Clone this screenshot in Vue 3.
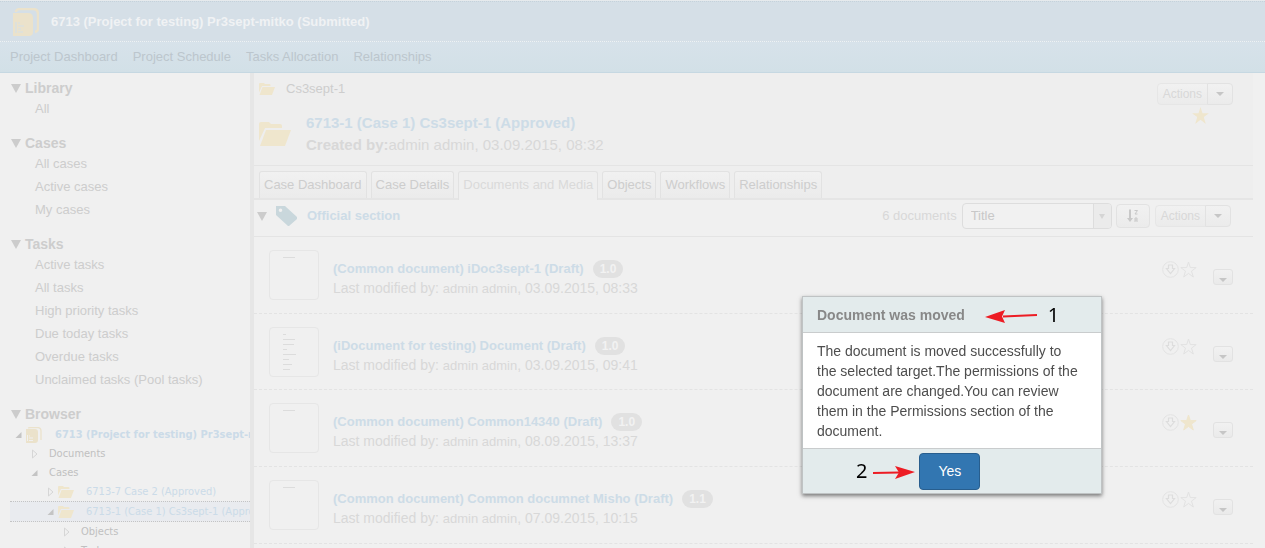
<script setup>
import { ref } from 'vue'

const navLinks = ['Project Dashboard', 'Project Schedule', 'Tasks Allocation', 'Relationships']

const sections = [
  { title: 'Library', items: ['All'] },
  { title: 'Cases', items: ['All cases', 'Active cases', 'My cases'] },
  {
    title: 'Tasks',
    items: ['Active tasks', 'All tasks', 'High priority tasks', 'Due today tasks', 'Overdue tasks', 'Unclaimed tasks (Pool tasks)'],
  },
]

const tree = [
  { label: '6713 (Project for testing) Pr3sept-mitko (Submitted)', level: 0, open: true, icon: 'project' },
  { label: 'Documents', level: 1, open: false },
  { label: 'Cases', level: 1, open: true },
  { label: '6713-7 Case 2 (Approved)', level: 2, open: false, icon: 'folder' },
  { label: '6713-1 (Case 1) Cs3sept-1 (Approved)', level: 2, open: true, icon: 'folder', selected: true },
  { label: 'Objects', level: 3, open: false },
  { label: 'Tasks', level: 3, open: false },
]

const tabs = ['Case Dashboard', 'Case Details', 'Documents and Media', 'Objects', 'Workflows', 'Relationships']
const activeTab = ref('Documents and Media')
const sortBy = ref('Title')

const longThumb = [3, 12, 11, 4, 13, 6, 9, 7]
const docs = ref([
  { title: '(Common document) iDoc3sept-1 (Draft)', version: '1.0', date: '03.09.2015, 08:33', lines: [12], starred: false },
  { title: '(iDocument for testing) Document (Draft)', version: '1.0', date: '03.09.2015, 09:41', lines: longThumb, starred: false },
  { title: '(Common document) Common14340 (Draft)', version: '1.0', date: '08.09.2015, 13:37', lines: [12], starred: true },
  { title: '(Common document) Common documnet Misho (Draft)', version: '1.1', date: '07.09.2015, 10:15', lines: [12], starred: false },
])
const dialogOpen = ref(true)
</script>

<template>
  <div class="page">
    <header class="header">
      <div class="title-bar">
        <svg class="project-icon" viewBox="0 0 26 28" aria-hidden="true">
          <path d="M3 4 V3 Q4 1 7 1 H20 Q25 1 25 6 V21 Q25 23 22 24" fill="none" stroke="#ebe2cb" stroke-width="2.4" />
          <path d="M0 5 H15 Q20 5 20 10 V24 Q20 28 16 28 H0 Z" fill="#ebe2cb" />
          <path d="M3 14 V25 M5 15 H7 M5 18 H11 M5 21 H8 M5 24 H10" stroke="#d5dfe7" stroke-width="1.2" />
        </svg>
        <h1>6713 (Project for testing) Pr3sept-mitko (Submitted)</h1>
      </div>
      <nav class="nav">
        <a v-for="l in navLinks" :key="l" href="#">{{ l }}</a>
      </nav>
    </header>

    <div class="columns">
      <aside class="sidebar">
        <section v-for="s in sections" :key="s.title" class="group">
          <h2><i class="tri"></i>{{ s.title }}</h2>
          <ul>
            <li v-for="i in s.items" :key="i"><a href="#">{{ i }}</a></li>
          </ul>
        </section>
        <section>
          <h2><i class="tri"></i>Browser</h2>
          <ul class="tree">
            <li v-for="n in tree" :key="n.label" :class="['level-' + n.level, { selected: n.selected }]">
              <svg class="toggle" viewBox="0 0 8 10" aria-hidden="true">
                <path v-if="n.open" d="M6.500 2 V8 H0.500 Z" fill="#c4c4c4" />
                <path v-else d="M1.500 1 V9 L6 5 Z" fill="none" stroke="#d6d6d6" />
              </svg>
              <svg v-if="n.icon === 'project'" class="node-icon" viewBox="0 0 16 16" aria-hidden="true">
                <path d="M2 1 Q3 .6 5 .6 H12 Q15 .6 15 4 V13" fill="none" stroke="#ebe2cb" stroke-width="1.300" />
                <path d="M0 2 H9 Q12 2 12 5 V13 Q12 16 9 16 H0 Z" fill="#ebe2cb" />
                <path d="M1.500 8 V14 M3 9 H4 M3 11 H7 M3 13.500 H7" stroke="#f0f0f0" />
              </svg>
              <svg v-else-if="n.icon" class="node-icon" viewBox="0 0 32 24" aria-hidden="true">
                <path d="M0 19 V2 Q0 0 2 0 H10 L12 2 H21 Q23 2 23 4 V6 H6 Z" fill="#efe6cd" />
                <path d="M7 8 H32 L26 24 H1 Z" fill="#efe6cd" />
              </svg>
              <a href="#">{{ n.label }}</a>
            </li>
          </ul>
        </section>
      </aside>

      <main class="main">
        <div class="case-head">
          <div class="case-info">
            <div class="crumb">
              <svg viewBox="0 0 32 24" aria-hidden="true">
                <path d="M0 19 V2 Q0 0 2 0 H10 L12 2 H21 Q23 2 23 4 V6 H6 Z" fill="#efe6cd" />
                <path d="M7 8 H32 L26 24 H1 Z" fill="#efe6cd" />
              </svg>
              <a href="#">Cs3sept-1</a>
            </div>
            <div class="case">
              <svg viewBox="0 0 32 24" aria-hidden="true">
                <path d="M0 19 V2 Q0 0 2 0 H10 L12 2 H21 Q23 2 23 4 V6 H6 Z" fill="#efe6cd" />
                <path d="M7 8 H32 L26 24 H1 Z" fill="#efe6cd" />
              </svg>
              <div>
                <a class="case-title" href="#">6713-1 (Case 1) Cs3sept-1 (Approved)</a>
                <p><b>Created by:</b>admin admin, 03.09.2015, 08:32</p>
              </div>
            </div>
          </div>
          <div class="case-tools">
            <div class="split">
              <button>Actions</button><button class="caret" aria-label="More actions"><i></i></button>
            </div>
            <svg class="star" viewBox="0 0 17 17" aria-hidden="true">
              <path d="M8.500 0 L10.500 6.200 H17 L11.800 10 L13.800 17 L8.500 12.800 L3.200 17 L5.200 10 L0 6.200 H6.500 Z" fill="#efe6cd" />
            </svg>
          </div>
        </div>

        <div class="tabs" role="tablist">
          <button
            v-for="t in tabs" :key="t" role="tab" :aria-selected="t === activeTab"
            :class="{ active: t === activeTab }" @click="activeTab = t"
          >{{ t }}</button>
        </div>

        <div class="toolbar">
          <i class="tri"></i>
          <svg class="tag" viewBox="0 0 22 20" aria-hidden="true">
            <path fill-rule="evenodd" d="M0 0 H9 L21 11 V13 L13 20 H12 L0 9 Z M4.500 2.500 A1.800 1.800 0 1 0 4.500 6.100 A1.800 1.800 0 1 0 4.500 2.500 Z" fill="#c9d7dc" />
          </svg>
          <h3>Official section</h3>
          <label for="sort">6 documents</label>
          <div class="select">
            <select id="sort" v-model="sortBy"><option>Title</option></select>
            <span><i></i></span>
          </div>
          <button class="sort" aria-label="Sort order">
            <svg viewBox="0 0 12 14" aria-hidden="true">
              <path d="M3 0.500 V11" stroke="#c8c8c8" stroke-width="2" />
              <path d="M0 9 H6 L3 13 Z" fill="#c8c8c8" />
              <path d="M7.500 1.500 H10.500 L8 5 H10.500 M8 13 V9 H10 V13 M8 11 H10" fill="none" stroke="#c8c8c8" />
            </svg>
          </button>
          <div class="split">
            <button>Actions</button><button class="caret" aria-label="More section actions"><i></i></button>
          </div>
        </div>

        <article v-for="d in docs" :key="d.title" class="doc">
          <div class="thumb">
            <i v-for="(w, k) in d.lines" :key="k" :style="{ width: w + 'px' }"></i>
          </div>
          <div class="doc-text">
            <div class="doc-title"><a href="#">{{ d.title }}</a><span class="badge">{{ d.version }}</span></div>
            <p>Last modified by: <a href="#">admin admin</a>, {{ d.date }}</p>
          </div>
          <div class="doc-icons">
            <svg viewBox="0 0 17 17" aria-hidden="true">
              <circle cx="8.500" cy="8.500" r="7.800" fill="none" stroke="#e3e3e3" />
              <path d="M6.500 4 H10.500 V7.500 H12.500 L8.500 12.500 L4.500 7.500 H6.500 Z" fill="none" stroke="#dddddd" stroke-width="1.200" />
            </svg>
            <svg viewBox="0 0 17 17" aria-hidden="true">
              <path
                d="M8.500 1 L10.300 6.600 H16.200 L11.500 10.100 L13.300 16 L8.500 12.400 L3.700 16 L5.500 10.100 L0.800 6.600 H6.700 Z"
                :fill="d.starred ? '#efe6cd' : 'none'" :stroke="d.starred ? '#efe6cd' : '#e2e2e2'"
              />
            </svg>
          </div>
          <button class="menu" aria-label="Document menu"><i></i></button>
        </article>
      </main>
    </div>

    <div v-if="dialogOpen" class="dialog" role="dialog" aria-labelledby="dialog-title">
      <header>
        <h2 id="dialog-title">Document was moved</h2>
        <svg class="arrow" viewBox="0 0 54 14" aria-hidden="true">
          <path d="M52 6 L18 7.500" stroke="#ed1c24" stroke-width="2" />
          <path d="M0 8 L20 1 L17 7.500 L20 14 Z" fill="#ed1c24" />
        </svg>
        <span class="mark">1</span>
      </header>
      <p>The document is moved successfully to the selected target.The permissions of the document are changed.You can review them in the Permissions section of the document.</p>
      <footer>
        <span class="mark">2</span>
        <svg class="arrow short" viewBox="0 0 42 14" aria-hidden="true">
          <path d="M0 8 L26 7.500" stroke="#ed1c24" stroke-width="2" />
          <path d="M42 7 L22 1 L26 7.500 L22 14 Z" fill="#ed1c24" />
        </svg>
        <button @click="dialogOpen = false">Yes</button>
      </footer>
    </div>
  </div>
</template>

<style>
body { background: #f0f0f0; }
</style>

<style scoped>
* { box-sizing: border-box; }
h1, h2, h3, p, ul { margin: 0; padding: 0; }
ul { list-style: none; }
a { color: inherit; text-decoration: none; }
svg { flex: none; display: block; }
button, select { font: inherit; color: inherit; }

.page {
  height: 100vh;
  overflow: hidden;
  display: flex;
  flex-direction: column;
  font: 13px/20px "Liberation Sans", Arial, sans-serif;
  color: #cdcdcd;
}

.header { flex: none; border-top: 1px solid #e6eaed; border-bottom: 1px solid #c6d8e2; background: #d5e0e8; }
.title-bar {
  display: flex;
  align-items: center;
  gap: 12px;
  height: 41px;
  padding-left: 13px;
  border-top: 1px dotted #c5d2db;
  border-bottom: 1px dotted #eef2f4;
  background: #d5dfe7;
}
.project-icon { width: 26px; height: 28px; }
h1 { font-size: 13px; color: #f0f2f4; }
.nav {
  display: flex;
  gap: 15px;
  height: 30px;
  align-items: center;
  padding-left: 10px;
  background: linear-gradient(#d7e2ea, #d2e0e7);
  color: #bcc6cd;
}

.columns { flex: 1; display: flex; min-height: 0; }
.sidebar {
  flex: none;
  width: 254px;
  padding-top: 6px;
  border-right: 4px solid #e6e6e6;
  overflow: hidden;
  white-space: nowrap;
}
.sidebar h2 { display: flex; align-items: center; padding-left: 11px; font-size: 14px; line-height: 18px; }
.tri { border: 5px solid transparent; border-top: 9px solid #cccccc; border-bottom: 0; }
.sidebar .tri { margin-right: 4px; }
.group { margin-bottom: 14px; }
.group li { padding-left: 35px; line-height: 23px; }

.tree { margin: 2px 0 0 10px; font: 11px/19px "DejaVu Sans Condensed", "DejaVu Sans", sans-serif; }
.tree li { display: flex; align-items: center; color: #c0c0c0; }
.toggle { width: 8px; height: 10px; }
.node-icon { width: 16px; height: 12px; margin: 0 12px 0 3px; }
.tree .level-0 { padding-left: 5px; color: #cbdbe8; font-weight: bold; }
.tree .level-0 .node-icon { height: 16px; margin: 0 13px 0 3px; }
.tree .level-1 { padding-left: 21px; gap: 10px; }
.tree .level-2 { padding-left: 37px; color: #cbdbe8; }
.tree .level-3 { padding-left: 53px; gap: 10px; }
.tree .selected { border-top: 1px dotted #c4c4c4; border-bottom: 1px dotted #c4c4c4; background: #e9ebef; }

.main { flex: 1; min-width: 0; margin-right: 12px; overflow: hidden; }
.case-head {
  display: flex;
  justify-content: space-between;
  height: 93px;
  padding: 6px 20px 0 5px;
  border-bottom: 1px solid #e4e4e4;
  background: #eeeeee;
}
.crumb { display: flex; align-items: center; gap: 11px; }
.crumb svg { width: 16px; height: 12px; }
.case { display: flex; align-items: center; gap: 15px; margin-top: 13px; font-size: 15px; line-height: 22px; color: #d8d8d8; }
.case svg { width: 32px; height: 24px; }
.case-title { font-weight: bold; color: #cddce7; }
.case-tools { padding-top: 4px; }
.star { width: 17px; height: 17px; margin: 2px 0 0 35px; }

.split { display: flex; height: 22px; font-size: 12px; color: #d8d8d8; }
.split button {
  padding: 0 5px;
  border: 1px solid #e6e6e6;
  border-radius: 4px 0 0 4px;
  background: linear-gradient(#f1f1f1, #ebebeb);
  line-height: 18px;
}
.split .caret { width: 26px; margin-left: -1px; border-color: #e2e2e2; border-radius: 0 4px 4px 0; display: flex; align-items: center; justify-content: center; }
.caret i, .menu i { border: 4px solid transparent; border-top-color: #c6c6c6; border-bottom: 0; }

.tabs { display: flex; align-items: flex-end; gap: 4px; height: 34px; padding-left: 5px; border-bottom: 2px solid #e5e5e5; background: #eeeeee; }
.tabs button {
  height: 27px;
  padding: 0 4px;
  border: 1px solid #e2e2e2;
  border-bottom: 0;
  border-radius: 3px 3px 0 0;
  background: linear-gradient(#f1f1f1, #ebebeb);
  cursor: pointer;
}
.tabs .active { height: 29px; margin-bottom: -2px; padding-bottom: 2px; background: #efefef; color: #dadada; }

.toolbar { display: flex; align-items: center; height: 37px; padding: 0 22px 4px 3px; border-bottom: 1px solid #e4e4e4; }
.tag { width: 22px; height: 20px; margin: 0 9px 0 9px; }
.toolbar h3 { font-size: 13px; color: #cddce7; margin-right: auto; }
.toolbar label { color: #d8d8d8; }
.select { display: flex; width: 150px; height: 26px; margin: 0 4px 0 5px; border: 1px solid #dddddd; border-radius: 4px; background: #f1f1f1; overflow: hidden; }
.select select { flex: 1; appearance: none; border: 0; padding: 0 8px; background: transparent; color: #c8c8c8; }
.select span { display: flex; align-items: center; justify-content: center; width: 18px; border-left: 1px solid #dddddd; background: #ebebeb; }
.select span i { border: 3px solid transparent; border-top: 5px solid #d5d5d5; border-bottom: 0; }
.sort { display: flex; align-items: center; justify-content: center; width: 34px; height: 24px; margin-right: 5px; padding: 0; border: 1px solid #e2e2e2; border-radius: 4px; background: linear-gradient(#f1f1f1, #ebebeb); }
.sort svg { width: 12px; height: 14px; }

.doc { display: flex; align-items: flex-start; height: 77px; padding: 13px 20px 0 15px; border-bottom: 1px dashed #e3e3e3; }
.doc:nth-of-type(4n + 2) { height: 76px; }
.thumb { flex: none; width: 50px; height: 50px; padding: 6px 0 0 13px; border: 1px solid #e6e6e6; border-radius: 4px; }
.thumb i { display: block; height: 1px; margin-bottom: 4px; background: #dcdcdc; }
.doc-text { margin: 9px auto 0 14px; }
.doc-title { display: flex; align-items: center; line-height: 19px; font-weight: bold; color: #cddce7; }
.badge { margin-left: 9px; padding: 0 7px; border-radius: 9px; background: #e1e1e1; color: #f2f2f2; font-size: 12px; line-height: 18px; }
.doc-text p { font-size: 14px; color: #d8d8d8; }
.doc-text p a { font-size: 13px; }
.doc-icons { display: flex; gap: 1px; margin: 11px 16px 0 0; }
.doc-icons svg { width: 17px; height: 17px; }
.menu { display: flex; align-items: flex-end; justify-content: center; width: 20px; height: 16px; margin-top: 19px; padding: 0 0 2px; border: 1px solid #e2e2e2; border-radius: 3px; background: linear-gradient(#f1f1f1, #eaeaea); }

.dialog {
  position: fixed;
  top: 296px;
  right: 163px;
  width: 300px;
  border: 1px solid #bfc3c4;
  background: #ffffff;
  box-shadow: 0 2px 4px rgba(0, 0, 0, 0.5);
  color: #4d4d4d;
}
.dialog header { display: flex; align-items: center; height: 36px; padding-left: 14px; border-bottom: 1px solid #c9cccd; background: #e3ebec; }
.dialog h2 { font-size: 14px; color: #888888; }
.dialog p { padding: 8px 18px 7px 14px; font-size: 14px; line-height: 20px; }
.dialog footer { display: flex; align-items: center; height: 45px; padding-left: 53px; border-top: 1px solid #c9cccd; background: #e3ebec; }
.dialog footer button { width: 61px; height: 37px; margin-left: 4px; border: 1px solid #285e8e; border-radius: 4px; background: #3276b1; color: #ffffff; font-size: 14px; }
.mark { color: #000000; font: 20px/24px "Noto Sans", sans-serif; }
.arrow { width: 54px; height: 14px; margin: 2px 9px 0 20px; }
.arrow.short { width: 42px; margin: 2px 0 0 6px; }
</style>
